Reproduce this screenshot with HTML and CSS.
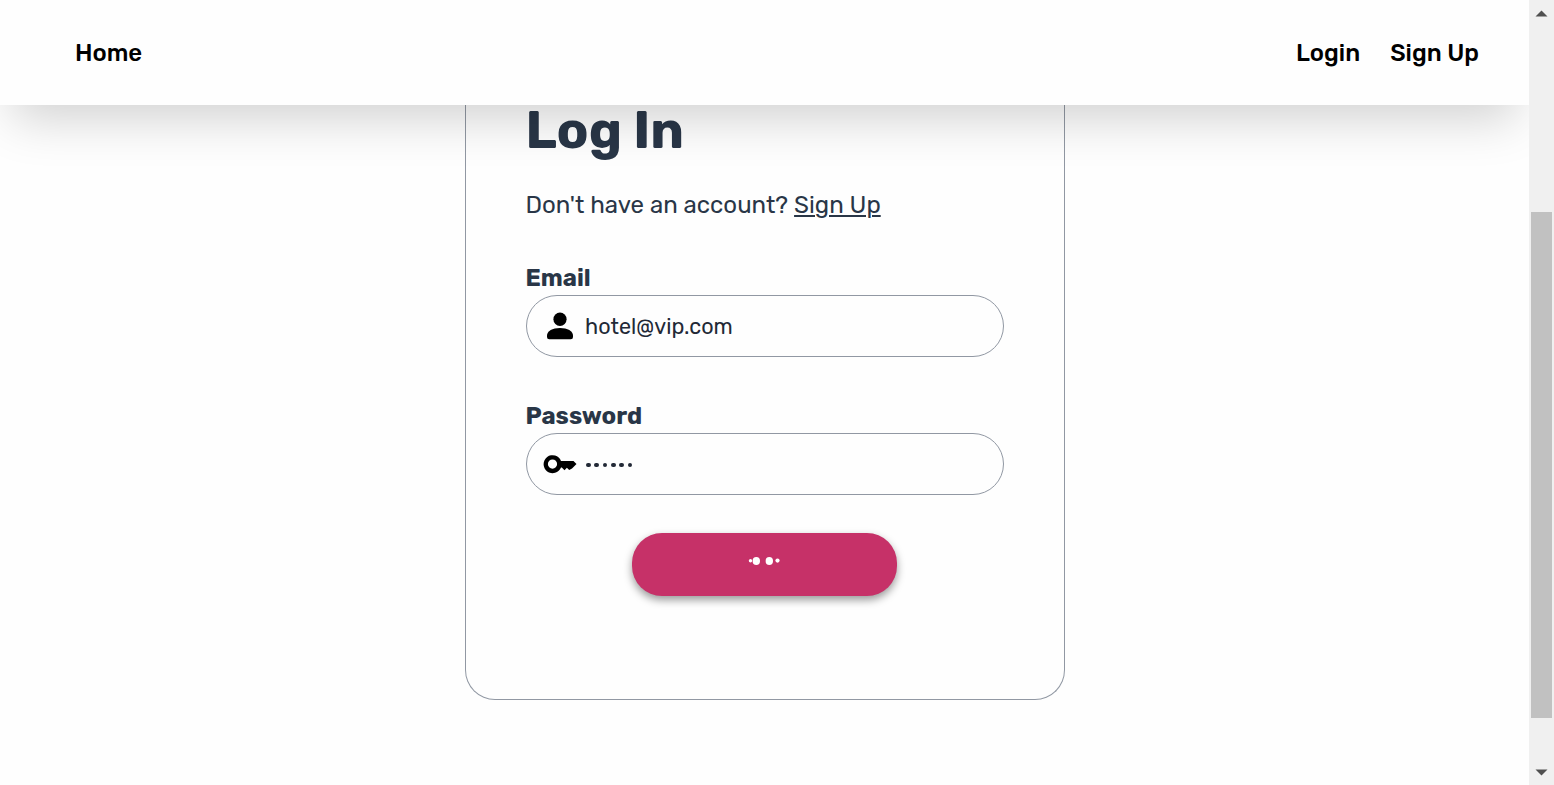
FILE: index.html
```
<!DOCTYPE html>
<html lang="en">
<head>
<meta charset="utf-8">
<title>Log In</title>
<link rel="stylesheet" href="styles.css">
</head>
<body>
<div class="page">
  <header class="navbar">
    <a class="nav-link">Home</a>
    <nav class="nav-right"><a class="nav-link">Login</a><a class="nav-link">Sign Up</a></nav>
  </header>
  <main class="content">
    <form class="card">
      <h1 class="title">Log In</h1>
      <p class="hint"><span class="question">Don't have an account?</span><a class="hint-link">Sign Up</a></p>
      <label class="label email-label">Email</label>
      <div class="field">
        <svg class="icon" width="34" height="34" viewBox="0 0 34 34"><ellipse cx="17" cy="10.200" rx="6.6" ry="6.7"/><path d="M4 26.500C4 22 9.500 19 17 19s13 3 13 7.500V28q0 2.200-2.200 2.200H6.200Q4 30.200 4 28Z"/></svg>
        <span class="value">hotel@vip.com</span>
      </div>
      <label class="label password-label">Password</label>
      <div class="field">
        <svg class="icon" width="34" height="34" viewBox="0 0 34 34"><path fill-rule="evenodd" d="M18 14h12.500l3 3-4.500 4.500-2.800 1.500-2.300-2.300-2.400 2.500-2.700-2.800H18a9 9 0 1 1 0-6.400ZM9.500 12.500a4.600 4.600 0 1 0 0 9.200 4.600 4.600 0 0 0 0-9.200Z"/></svg>
        <span class="dots"><i></i><i></i><i></i><i></i><i></i><i></i></span>
      </div>
      <button class="submit" type="button" aria-label="Loading"><svg width="34" height="10" viewBox="0 0 34 10" fill="#fff"><circle cx="3.500" cy="4.700" r="1.700"/><ellipse cx="9.300" cy="5" rx="3.700" ry="4.100"/><ellipse cx="22.300" cy="5" rx="3.700" ry="4.100"/><circle cx="30.500" cy="4.600" r="2.100"/></svg></button>
    </form>
  </main>
</div>
<aside class="scrollbar">
  <svg width="13" height="7" viewBox="0 0 13 7"><path d="M.5 6.500 6.500.5l6 6Z"/></svg>
  <div class="thumb"></div>
  <svg class="down" width="13" height="7" viewBox="0 0 13 7"><path d="M.5.500h12l-6 6Z"/></svg>
</aside>
</body>
</html>
```
FILE: styles.css
```
* { box-sizing: border-box; }
body {
  margin: 0;
  height: 785px;
  display: flex;
  overflow: hidden;
  background: #fefefe;
  color: #293647;
  font-family: Rubik, Roboto, sans-serif;
}
.page { width: 1529px; height: 785px; overflow: hidden; }
.navbar {
  position: relative;
  z-index: 1;
  height: 105px;
  padding: 0 50px 0 75px;
  display: flex;
  align-items: center;
  justify-content: space-between;
  background: #fefefe;
  box-shadow: 0 25px 50px -12px rgba(0, 0, 0, .185);
}
.nav-right { display: flex; gap: 30px; }
.nav-link { color: #000; font-size: 24px; font-weight: 500; line-height: 30px; white-space: nowrap; }
.card {
  width: 600px;
  height: 595px;
  margin: 0 auto;
  padding: 0 60px;
  border: 1px solid #9198a3;
  border-top: 0;
  border-radius: 0 0 30px 30px;
  display: flex;
  flex-direction: column;
}
.title { margin: -5px 0 0; font-size: 52.500px; line-height: 60px; font-weight: 700; white-space: nowrap; }
.hint { margin: 30px 0 0; display: flex; gap: 6px; font-size: 24px; line-height: 30px; font-weight: 400; white-space: nowrap; }
.hint-link { text-decoration: underline; text-decoration-thickness: 2px; text-underline-offset: 2px; }
.label { align-self: flex-start; font-size: 24px; line-height: 30px; font-weight: 700; }
.email-label { margin-top: 43px; }
.password-label { margin-top: 44px; }
.field {
  height: 62px;
  margin-top: 2px;
  padding-left: 16px;
  display: flex;
  align-items: center;
  border: 1px solid #9198a3;
  border-radius: 31px;
}
.icon { flex: none; fill: #000; }
.value { margin: 2px 0 0 8.500px; color: #222936; font-size: 21.600px; line-height: 30px; font-weight: 400; }
.dots { margin: 2px 0 0 9.700px; display: flex; gap: 3.700px; }
.dots i { width: 4.600px; height: 4.600px; border-radius: 50%; background: #222936; }
.submit {
  width: 265px;
  height: 63px;
  margin: 38px 0 0 106px;
  padding: 0 0 7px;
  display: flex;
  align-items: center;
  justify-content: center;
  border: 0;
  border-radius: 30px;
  background: #c63168;
  box-shadow: 0 4px 9px rgba(0, 0, 0, .4);
}
.scrollbar {
  width: 25px;
  height: 785px;
  padding: 10px 0 9px;
  display: flex;
  flex-direction: column;
  align-items: center;
  background: #f0f0f0;
  fill: #505050;
}
.thumb { flex: none; width: 21px; height: 506px; margin-top: 195px; background: #c1c1c1; }
.down { margin-top: 51px; }
```
